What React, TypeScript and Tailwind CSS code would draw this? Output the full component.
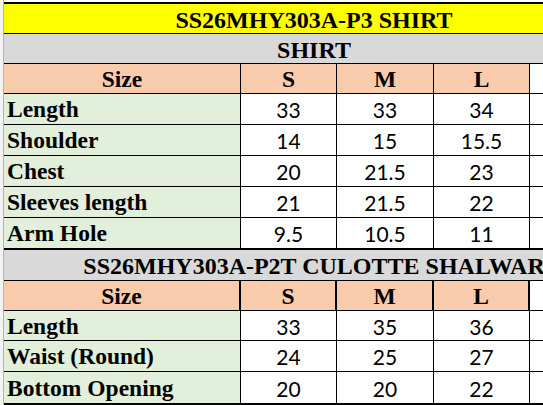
import React from 'react'

const serif = "font-['Liberation_Serif','Times_New_Roman',serif] font-bold text-[23.5px] leading-none"
const titleFont = "font-['Liberation_Serif','Times_New_Roman',serif] font-bold text-[24px] leading-none"
const nums = "font-['Lato','Liberation_Sans',sans-serif] text-[21px] leading-none"

type Row = { label: string; s: string; m: string; l: string; h: string; last?: boolean }

const shirtRows: Row[] = [
  { label: 'Length', s: '33', m: '33', l: '34', h: 'h-[31px]' },
  { label: 'Shoulder', s: '14', m: '15', l: '15.5', h: 'h-[31px]' },
  { label: 'Chest', s: '20', m: '21.5', l: '23', h: 'h-[31px]' },
  { label: 'Sleeves length', s: '21', m: '21.5', l: '22', h: 'h-[31px]' },
  { label: 'Arm Hole', s: '9.5', m: '10.5', l: '11', h: 'h-[32px]', last: true },
]

const shalwarRows: Row[] = [
  { label: 'Length', s: '33', m: '35', l: '36', h: 'h-[30px]' },
  { label: 'Waist (Round)', s: '24', m: '25', l: '27', h: 'h-[31px]' },
  { label: 'Bottom Opening', s: '20', m: '20', l: '22', h: 'h-[33px]', last: true },
]

function TitleRow({ text, bg, h }: { text: string; bg: string; h: string }) {
  return (
    <div className={`flex ${h} border-b border-black ${bg}`}>
      <div className={`w-[620px] shrink-0 flex items-center justify-center whitespace-nowrap pt-[2px] text-black ${titleFont}`}>
        {text}
      </div>
    </div>
  )
}

function HeaderRow({ thick, h }: { thick?: boolean; h: string }) {
  const b = thick ? 'border-r-2' : 'border-r'
  return (
    <div className={`flex ${h} border-b border-black`}>
      <div className={`w-[237px] shrink-0 ${b} border-black bg-[#f8cbad] flex items-center justify-center pt-[2px] ${serif}`}>Size</div>
      <div className={`w-[96px] shrink-0 ${b} border-black bg-[#f8cbad] flex items-center justify-center pt-[2px] ${serif}`}>S</div>
      <div className={`w-[97px] shrink-0 ${b} border-black bg-[#f8cbad] flex items-center justify-center pt-[2px] ${serif}`}>M</div>
      <div className={`w-[96px] shrink-0 ${b} border-black bg-[#f8cbad] flex items-center justify-center pt-[2px] ${serif}`}>L</div>
      <div className="w-[92px] shrink-0 bg-white" />
    </div>
  )
}

function DataRow({ row }: { row: Row }) {
  return (
    <div className={`flex ${row.h} border-black ${row.last ? 'border-b-2' : 'border-b'}`}>
      <div className={`w-[237px] shrink-0 border-r border-black bg-[#e2efda] flex items-center pl-[3px] pt-[2px] ${serif}`}>
        {row.label}
      </div>
      <div className={`w-[96px] shrink-0 border-r border-black bg-white flex items-center justify-center pt-[1px] ${nums}`}>{row.s}</div>
      <div className={`w-[97px] shrink-0 border-r border-black bg-white flex items-center justify-center pt-[1px] ${nums}`}>{row.m}</div>
      <div className={`w-[96px] shrink-0 border-r border-black bg-white flex items-center justify-center pt-[1px] ${nums}`}>{row.l}</div>
      <div className="w-[92px] shrink-0 bg-white" />
    </div>
  )
}

export default function App() {
  return (
    <div className="w-[543px] h-[405px] overflow-hidden bg-white flex text-black">
      <div className="w-[4px] shrink-0 h-full bg-[#f3f3f3] border-r border-[#b4b4b4]" />
      <div className="flex-1 min-w-0 pt-[2px]">
        <div className="border-t-2 border-black">
          <TitleRow text="SS26MHY303A-P3 SHIRT" bg="bg-[#ffff00]" h="h-[30px]" />
          <TitleRow text="SHIRT" bg="bg-[#d9d9d9]" h="h-[30px]" />
          <HeaderRow h="h-[30px]" />
          {shirtRows.map((r) => (
            <DataRow key={r.label} row={r} />
          ))}
          <TitleRow text="SS26MHY303A-P2T CULOTTE SHALWAR" bg="bg-[#d9d9d9]" h="h-[31px]" />
          <HeaderRow thick h="h-[30px]" />
          {shalwarRows.map((r) => (
            <DataRow key={r.label} row={r} />
          ))}
        </div>
      </div>
    </div>
  )
}
